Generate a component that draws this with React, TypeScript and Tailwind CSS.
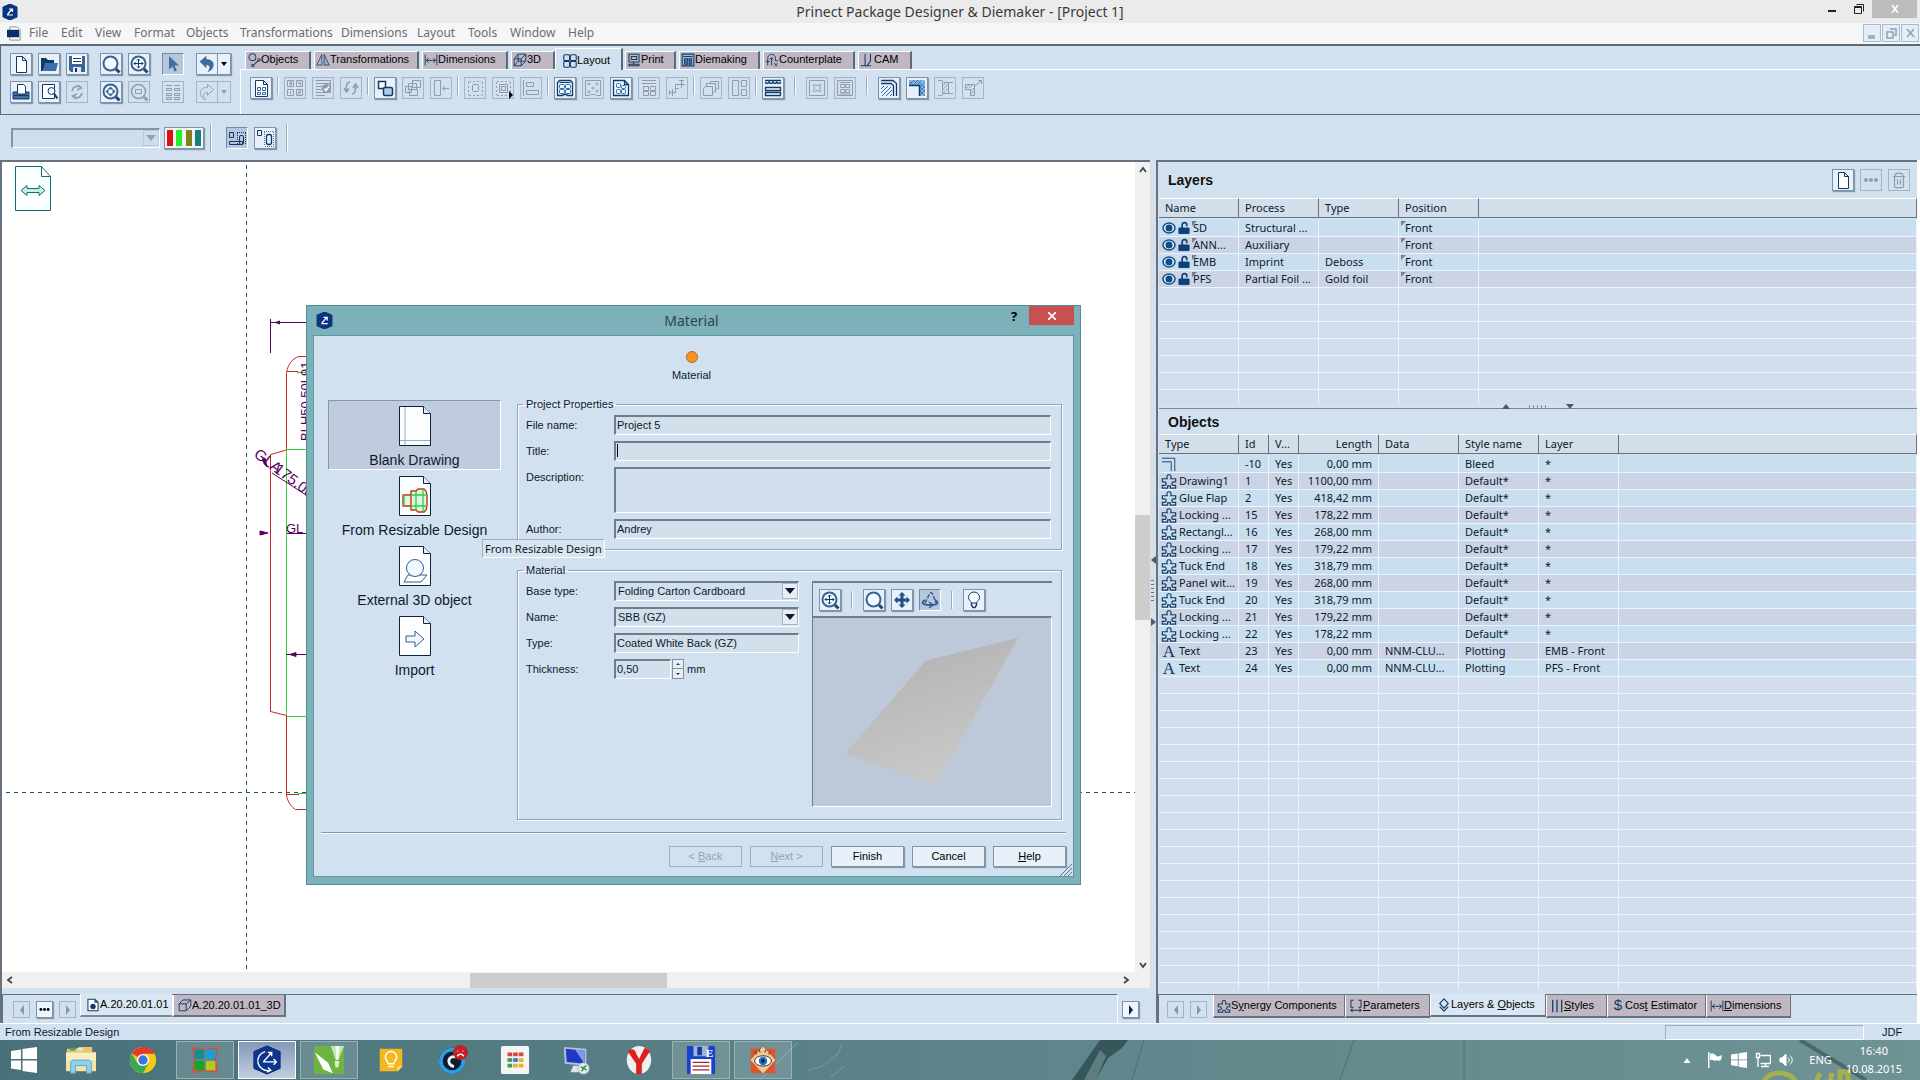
import type { ReactNode } from "react";
import clsx from "clsx";

const sans = "font-['Liberation_Sans',Arial,sans-serif]";
const noto = "font-['Noto_Sans','Open_Sans',sans-serif]";

/* ---------- icons ---------- */

const icons: Record<string, ReactNode> = {
    page: <path d="M4.5 1.5h6l4 4v12h-10zM10.5 1.5v4h4" fill="#fff" />,
    open: (
        <>
            <path d="M1 16V3h5l2 2h6v3H6L3 16z" fill="#123a66" stroke="none" />
            <path d="M3 16l2-8h13l-2 8z" fill="#3b71a8" stroke="none" />
        </>
    ),
    save: (
        <>
            <path d="M1 1h16v16H3l-2-2z" fill="#3b6694" stroke="none" />
            <path d="M4 1h10v8H4z" fill="#fff" stroke="none" />
            <path d="M5 3.5h8M5 6.5h8" />
            <path d="M5 12h8v5H5z" fill="#dfe9f3" stroke="none" />
            <path d="M7 13h2v4H7z" fill="#123a66" stroke="none" />
        </>
    ),
    zoom: (
        <>
            <circle cx="8.500" cy="8.500" r="7" fill="#f4f9ff" strokeWidth="2" stroke="#386494" />
            <path d="M14 14l3.500 3.500" strokeWidth="3" stroke="#1f4673" />
        </>
    ),
    zoomAll: (
        <>
            <circle cx="8.500" cy="8.500" r="7" fill="#f4f9ff" strokeWidth="2" stroke="#386494" />
            <path d="M14 14l3.500 3.500" strokeWidth="3" stroke="#1f4673" />
            <path d="M8.500 4v9M4 8.500h9M7 5.500L8.500 4 10 5.500M7 11.500L8.500 13l1.500-1.500M5.500 7L4 8.500 5.500 10M11.500 7L13 8.500 11.500 10" />
        </>
    ),
    zoomFit: (
        <>
            <circle cx="8.500" cy="8.500" r="7" fill="#f4f9ff" strokeWidth="2" stroke="#386494" />
            <path d="M14 14l3.500 3.500" strokeWidth="3" stroke="#1f4673" />
            <path d="M8.500 3.500l5 5-5 5-5-5z" fill="#386494" stroke="none" />
            <path d="M6.500 6.500h4v4h-4z" fill="#fff" stroke="none" />
        </>
    ),
    zoomRect: (
        <>
            <circle cx="8.500" cy="8.500" r="7" strokeWidth="1.500" />
            <path d="M14 14l3.500 3.500" strokeWidth="3" />
            <path d="M5.500 6.500h6v4h-6z" />
        </>
    ),
    cursor: <path d="M5 1l10 9.500h-4.500l2.500 5-2.500 1-2-5-3.500 3z" fill="#3f6fa3" stroke="none" />,
    undo: (
        <path d="M2 6.500l6-5v3c6 0 8 3 7 7-.5 2-2 4-5 5 2.500-2.500 3-7-2-7v3z" fill="#3b6ca3" stroke="#28527f" strokeWidth=".6" />
    ),
    redo: <path d="M15.500 6.500l-6-5v3c-6 0-8 3-7 7 .5 2 2 4 5 5-2.500-2.500-3-7 2-7v3z" strokeWidth=".9" />,
    print: (
        <>
            <path d="M1 9h16v7H1z" fill="#3b71a8" stroke="#123a66" />
            <path d="M5.500 1.500h6l2 2V11h-8z" fill="#fff" />
            <path d="M2 12.500h14" />
        </>
    ),
    preview: (
        <>
            <path d="M2.500 1.500h12v14h-12z" fill="#fff" />
            <circle cx="11.500" cy="8" r="3.500" fill="#eef5fc" />
            <path d="M14 10.500l3.500 5" strokeWidth="2" />
        </>
    ),
    refresh: <path d="M4 8c1-5 6-6 9-3M10 2l3.500 3L9 7M14 10c-1 5-6 6-9 3M8 16l-3.500-3L9 11" strokeWidth="1.500" />,
    list: <path d="M2 2.500h6M10 2.500h6M2.500 5.500h5v2h-5zM10.500 5.500h5v2h-5zM2.500 10.500h5v2h-5zM10.500 10.500h5v2h-5zM2.500 14.500h5v2h-5zM10.500 14.500h5v2h-5z" />,
    sheet: (
        <>
            <path d="M3.500 1.500h8l4 4v12h-12zM11.500 1.500v4h4" fill="#fff" />
            <path d="M5.500 8.500h3v3h-3zM10.500 8.500h3v3h-3zM5.500 13.500h3v2h-3zM10.500 13.500h3v2h-3z" stroke="#2b6cae" />
        </>
    ),
    numbers: (
        <>
            <path d="M1.500 1.500h6v6h-6zM10.500 1.500h6v6h-6zM1.500 10.500h6v6h-6zM10.500 10.500h6v6h-6z" />
            <path d="M3.500 3h2v3h-2M3.500 4.500h2M12.500 2.500v2h2.500M14.500 3v3.500M4.500 12v3M12.500 12h2v1.500h-2V15h2" />
        </>
    ),
    check: (
        <>
            <path d="M1.500 1.500h15v12h-15M2 4.500h14M2 7.500h14M2 10.500h9M2 13.500h9M2 16.500h9" />
            <circle cx="12.500" cy="9.500" r="4.500" fill="currentColor" stroke="none" />
            <path d="M10.500 9.500l1.500 2 3-4" stroke="#fff" strokeWidth="1.500" />
        </>
    ),
    swap: <path d="M8 3C5 3 4 6 4.500 11M2 9l2.500 4L7 9.500M10 15c3 0 4-4 3.500-8M11 9l2.500-4L16 9" strokeWidth="1.500" />,
    boxes: (
        <>
            <path d="M2.500 2.500h7v7h-7z" fill="#fff" strokeWidth="1.500" />
            <rect x="7.500" y="8.500" width="9" height="8" rx="1.500" fill="#a9d0ea" strokeWidth="1.500" />
        </>
    ),
    boxes3: (
        <>
            <path d="M1.500 7.500h6v6h-6z" />
            <path d="M5.500 10.500h8v6h-8zM8.500 1.500h8v7h-8zM4.500 4.500h8v6h-8z" />
        </>
    ),
    alignLeft: <path d="M2.500 1.500h6v15h-6zM17 9.500h-6M13 7l-2.500 2.500L13 12" />,
    select: (
        <>
            <path d="M3 2.500h13M3 16.500h13M2.500 3v13M16.500 3v13" strokeDasharray="2 2" />
            <rect x="6.500" y="5.500" width="6" height="7" rx="1" />
        </>
    ),
    selectBox: (
        <>
            <path d="M3 2.500h13M3 16.500h13M2.500 3v13M16.500 3v13" strokeDasharray="2 2" />
            <path d="M5.500 5.500h8v8h-8zM7.500 7.500h4v4h-4z" />
            <path d="M15 12l4 4-4 4z" fill="#000" stroke="none" />
        </>
    ),
    bars: <path d="M1.500 1v16M4.500 3.500h7v4h-7zM4.500 11.500h12v4h-12z" />,
    layoutGrid: (
        <>
            <path d="M1.500 16.500v-13l2-2h11l2 2v13h-5l-1-1h-3l-1 1z" fill="#eef6fd" strokeWidth="1.300" />
            <path d="M3.500 3.500h11" />
            <rect x="3.500" y="5.500" width="5" height="4" rx="1" stroke="#2b6cae" />
            <rect x="9.500" y="5.500" width="5" height="4" rx="1" stroke="#2b6cae" />
            <rect x="3.500" y="10.500" width="5" height="4" rx="1" stroke="#2b6cae" />
            <rect x="9.500" y="10.500" width="5" height="4" rx="1" stroke="#2b6cae" />
        </>
    ),
    dice: (
        <>
            <path d="M1.500 1.500h15v15h-4l-1-1h-5l-1 1h-4z" />
            <circle cx="5" cy="5" r="1" /><circle cx="13" cy="5" r="1" /><circle cx="9" cy="9" r="1" />
            <circle cx="5" cy="13" r="1" /><circle cx="13" cy="12" r="1" />
        </>
    ),
    layoutPage: (
        <>
            <path d="M1.500 1.500h11l4 4v11h-15zM12.500 1.500v4h4" fill="#eef6fd" strokeWidth="1.300" />
            <rect x="4.500" y="4.500" width="4" height="4" rx="1" stroke="#2b6cae" />
            <rect x="9.500" y="6.500" width="4" height="3" rx="1" stroke="#2b6cae" />
            <rect x="4.500" y="10.500" width="4" height="4" rx="1" stroke="#2b6cae" />
            <rect x="9.500" y="10.500" width="4" height="4" rx="1" stroke="#2b6cae" />
        </>
    ),
    gridRows: <path d="M2 1.500h14M2 4.500h14M3.500 7.500h5v4h-5zM10.500 7.500h5v4h-5zM3.500 12.500h5v4h-5zM10.500 12.500h5v4h-5z" />,
    steps: <path d="M1 13.500h6.500M4.500 10v7M7.500 13.500v-8H17M13.500 1v8M11 1.500h5M1.500 11v5M7 9.500h4" />,
    stack: <path d="M1.500 9.500l2-2h7v9h-9zM4.500 7V4.500h9V13h-3M8.500 4.500v-2h8V10h-3" />,
    panels: <path d="M2.500 1.500h6v15h-6zM11.500 1.500h5v6h-5zM11.500 10.500h5v6h-5z" />,
    wave: (
        <>
            <path d="M1 1.500h16M1 3c1 2 3 2 4 0 1 2 3 2 4 0 1 2 3 2 4 0 1 2 3 2 4 0" strokeWidth="1.300" />
            <path d="M1.500 8.500h15v3h-15zM1.500 13.500h15v3h-15z" fill="#fff" strokeWidth="1.300" />
        </>
    ),
    star: (
        <>
            <path d="M1.500 1.500h15v15h-15z" />
            <path d="M5.500 5.500c1 0 2 1 3.500 1s2.500-1 3.500-1c1 1-1 2-1 3.500s2 2.500 1 3.500-2-1-3.500-1-2.500 2-3.500 1 1-2 1-3.500-2-2.500-1-3.500z" />
        </>
    ),
    rows: <path d="M1.500 1.500h15v15h-15zM3.500 3.500h11M4.500 5.500h4v3h-4zM9.500 5.500h4v3h-4zM4.500 10.500h4v3h-4zM9.500 10.500h4v3h-4zM3.500 15h11" />,
    hatch: (
        <>
            <path d="M1 1.500h12l3.500 3V17M1 4.500h10l2.500 2V17" strokeWidth="1.300" />
            <path d="M1 10l3-3M1 14l7-7M2 17l9-9M6 17l6-6M10 17l2-2" stroke="#2b6cae" />
        </>
    ),
    corner: (
        <>
            <path d="M1 1h16v16h-5V6H1z" fill="#8db6dd" stroke="none" />
            <path d="M1 6l5-5M5 6l5-5M9 6l5-5M12 8l5-5M12 12l5-5M12 16l5-5M1 2l4 4M5 1l5 5M9 1l8 8M12 8l5 5M12 12l5 5" stroke="#2b6cae" strokeWidth=".7" />
            <path d="M1 6.500h10.500V17" strokeWidth="1.500" />
        </>
    ),
    cylinder: <path d="M2 1.500h4l2 2h9M2 16.500h4l2-2h9M6.500 3v12M12.500 4v10M6.500 7l4-4M6.500 11l6-6M6.500 15l6-6" />,
    cornerArrow: (
        <>
            <path d="M1.500 5.500h9v11h-4v-6h-5z" />
            <path d="M2 9l3-3M5 9l3-3M7 12l3-3M7 15l3-3M11 7l6-5M14 1.500h3.500V5" />
        </>
    ),
    dots: (
        <>
            <circle cx="4" cy="9" r="2" fill="currentColor" stroke="none" />
            <circle cx="9" cy="9" r="2" fill="currentColor" stroke="none" />
            <circle cx="14" cy="9" r="2" fill="currentColor" stroke="none" />
        </>
    ),
    trash: <path d="M3 5.500h12M5 5V4c1-2.500 7-2.500 8 0v1M4.500 6v10c0 1 9 1 9 0V6M7.500 8.500v5M10.500 8.500v5" strokeWidth="1.200" />,
    nodesA: (
        <>
            <path d="M1.500 3.500h4v5h-4zM1.500 12.500h13v3h-13z" />
            <rect x="11.500" y="6.500" width="4" height="9" rx="1.500" />
            <path d="M9 3.500h9M9.500 4v12M17.500 4v12" strokeDasharray="1 1" />
        </>
    ),
    nodesB: (
        <>
            <path d="M1.500 1.500h4v5h-4z" />
            <rect x="10.500" y="5.500" width="5" height="10" rx="2" strokeWidth="1.300" />
            <path d="M8 2.500h10M8.500 3v14M17.500 3v14M9 17.500h9" strokeDasharray="1 1" stroke="#3f7fc0" />
        </>
    ),
    pan: <path d="M9 1l3.500 3.500H10.500v3h3V5.500L17 9l-3.500 3.500v-2h-3v3h2L9 17l-3.500-3.500h2v-3h-3v2L1 9l3.500-3.500v2h3v-3h-2z" fill="#1f4f85" stroke="none" />,
    rotate: (
        <g stroke="#2b5c96">
            <path d="M4 12L8 4c1-3 3-3 4 0l3 8" strokeWidth="1.500" strokeDasharray="4 1.500" />
            <path d="M4 9c-5 3-2 5 5 5s10-2 5-5" strokeWidth="1.800" />
            <path d="M8 11l4 3-4 3" strokeWidth="1.500" />
        </g>
    ),
    bulb: (
        <>
            <path d="M6.500 12C6 10 3.500 9 3.500 6.500a5.500 5.500 0 0 1 11 0C14.500 9 12 10 11.500 12z" fill="#f8fcff" />
            <path d="M6.500 12v2l1.500 2.500h2l1.500-2.500v-2" strokeWidth="1.400" />
        </>
    ),
    tabObjects: <path d="M11.500 5.500a4.500 4.500 0 1 1-9 0 4.500 4.500 0 0 1 9 0zM9.500 14.500L14 10M6 16a1.500 1.500 0 1 0 3 0 1.500 1.500 0 1 0-3 0zM14 9a1.500 1.500 0 1 0 3 0 1.500 1.500 0 1 0-3 0" strokeWidth="1.300" />,
    tabTransform: (
        <>
            <path d="M1 15.500h6.500V2z" />
            <path d="M10.500 2v13.500H17z" fill="#8fb3d6" />
        </>
    ),
    tabDim: <path d="M1.500 2v14M16.500 2v14M3 9.500h12M6 6.500l-3 3 3 3M12 6.500l3 3-3 3" strokeWidth="1.200" />,
    cube: <path d="M1.500 7.500h9v9h-9zM1.500 7.500l5-6h10l-6 6M16.500 1.500v9l-6 6M6.500 1.500v9M6.500 10.500h10M6.500 10.500l-5 6" strokeWidth="1.200" />,
    cubePlain: <path d="M1.500 7.500h9v9h-9zM1.500 7.500l5-5h10l-6 5M16.500 2.500v8l-6 6" strokeWidth="1.200" />,
    tabLayout: (
        <g strokeWidth="1.400">
            <rect x="1" y="1" width="7.500" height="7.500" rx="1.500" /><rect x="9.500" y="1" width="7.500" height="7.500" rx="1.500" />
            <rect x="1" y="9.500" width="7.500" height="7.500" rx="1.500" /><rect x="9.500" y="9.500" width="7.500" height="7.500" rx="1.500" />
        </g>
    ),
    tabPrint: <path d="M2.500 1.500h13v10h-13zM5.500 4.500h7v4h-7zM8.500 11.500v3M2.500 14.500h13v2h-13z" strokeWidth="1.300" />,
    tabDie: <path d="M1.500 1.500h15v15h-15zM3 4.500h12M4.500 7.500h4v3h-4zM10.500 7.500h3v3h-3zM4.500 12.500h4v2h-4zM10.500 12.500h3v2h-3z" fill="#9cbbe0" strokeWidth="1.400" />,
    tabCounter: <path d="M3.500 16V7c0-7 10-7 10 0v3h3M1 11h5M8.500 16V6M6 8.500L8.500 6 11 8.500M12 13l4 4M16 13l-4 4" strokeWidth="1.200" />,
    tabCam: <path d="M1 16.500h13M6.500 1v15M13.500 1v9l-4 6" strokeWidth="1.300" />,
    docDot: (
        <>
            <path d="M2.500 1.500h9l4 4v11h-13zM11.500 1.500v4h4" fill="#fff" strokeWidth="1.300" />
            <circle cx="9" cy="11" r="3.500" fill="#123a66" stroke="none" />
        </>
    ),
    puzzle: (
        <path
            d="M1.500 6.500h5.500c-2.500-6 6.500-6 4 0h5.500v3.500h-2c-3 0-3 4 0 4h2v3h-6v-2.500h-3v2.500h-6v-3h2c3 0 3-4 0-4h-2z"
            strokeWidth="1.300"
        />
    ),
    params: <path d="M6 1.500H2.500v9H6M12 1.500h3.500v9H12M2 14.500h14M4.500 12.500l-2 2 2 2M13.500 12.500l2 2-2 2" strokeWidth="1.300" />,
    layers: <path d="M9 1l5.500 6L9 13 3.500 7zM3.500 11L9 17l5.500-6" strokeWidth="1.500" />,
    styles: <path d="M3.500 1v16M9 1v16M15 1v16" strokeWidth="1.600" />,
    bleed: <path d="M1 2.500h14.500V17M1 6.500h10.500V17" />,
};

function Icon({ name, size = "size-[18px]", color = "text-[#123a66]" }: { name: string; size?: string; color?: string }) {
    return (
        <svg viewBox="0 0 18 18" className={clsx("shrink-0 overflow-visible", size, color)} fill="none" stroke="currentColor" aria-hidden="true">
            {icons[name]}
        </svg>
    );
}

type ToolState = "on" | "off" | "pressed";

function Tool({ icon, label, state = "on" }: { icon: string; label: string; state?: ToolState }) {
    return (
        <button
            type="button"
            aria-label={label}
            disabled={state === "off"}
            className={clsx(
                "flex h-[22px] w-[22px] shrink-0 items-center justify-center border",
                state === "on" && "border-[#7f93a8] bg-[#e8f1fb] shadow-[1px_1px_1px_#8797a8]",
                state === "off" && "border-[#a3b5c4]",
                state === "pressed" && "border-[#7889a0] border-r-white border-b-white bg-[#b8c6dc]"
            )}
        >
            <Icon name={icon} color={state === "off" ? "text-[#909da8]" : "text-[#123a66]"} />
        </button>
    );
}

function Sep({ wide = false }: { wide?: boolean }) {
    return (
        <div className={clsx("flex h-[18px] justify-center", wide ? "w-[10px]" : "w-0")}>
            <div className="w-[2px] shrink-0 border-r border-white bg-[#9aabba]" />
        </div>
    );
}

/* ---------- data ---------- */

const menus = [
    { label: "File", width: "w-8" },
    { label: "Edit", width: "w-[34px]" },
    { label: "View", width: "w-[39px]" },
    { label: "Format", width: "w-[52px]" },
    { label: "Objects", width: "w-[54px]" },
    { label: "Transformations", width: "w-[101px]" },
    { label: "Dimensions", width: "w-[76px]" },
    { label: "Layout", width: "w-[51px]" },
    { label: "Tools", width: "w-[42px]" },
    { label: "Window", width: "w-[58px]" },
    { label: "Help", width: "w-[30px]" },
];

const toolTabs = [
    { label: "Objects", icon: "tabObjects", width: "w-[66px]" },
    { label: "Transformations", icon: "tabTransform", width: "w-[105px]" },
    { label: "Dimensions", icon: "tabDim", width: "w-[86px]" },
    { label: "3D", icon: "cube", width: "w-[44px]" },
    { label: "Layout", icon: "tabLayout", width: "w-[68px]", active: true },
    { label: "Print", icon: "tabPrint", width: "w-[51px]" },
    { label: "Diemaking", icon: "tabDie", width: "w-[81px]" },
    { label: "Counterplate", icon: "tabCounter", width: "w-[92px]" },
    { label: "CAM", icon: "tabCam", width: "w-[54px]" },
];

const layoutTools: [string, string, ToolState][] = [
    ["sheet", "New sheet", "on"],
    ["|", "", "off"],
    ["numbers", "Numbering", "off"],
    ["check", "Check layout", "off"],
    ["swap", "Swap", "off"],
    ["|", "", "off"],
    ["boxes", "Copy one-up", "on"],
    ["boxes3", "Group", "off"],
    ["alignLeft", "Move", "off"],
    ["|", "", "off"],
    ["select", "Select one-up", "off"],
    ["selectBox", "Select area", "off"],
    ["bars", "Align", "off"],
    ["|", "", "off"],
    ["layoutGrid", "Fill sheet", "on"],
    ["dice", "Mixed layout", "off"],
    ["layoutPage", "Page layout", "on"],
    ["gridRows", "Rows", "off"],
    ["steps", "Steps", "off"],
    ["|", "", "off"],
    ["stack", "Stack", "off"],
    ["panels", "Panels", "off"],
    ["|", "", "off"],
    ["wave", "Corrugation", "on"],
    ["||", "", "off"],
    ["star", "Stripping", "off"],
    ["rows", "Blanking", "off"],
    ["||", "", "off"],
    ["hatch", "Hatch", "on"],
    ["corner", "Corner", "on"],
    ["cylinder", "Cylinder", "off"],
    ["cornerArrow", "Extend", "off"],
];

const layers = [
    ["SD", "Structural ...", "", "Front"],
    ["ANN...", "Auxiliary", "", "Front"],
    ["EMB", "Imprint", "Deboss", "Front"],
    ["PFS", "Partial Foil ...", "Gold foil", "Front"],
];

const objects = [
    ["bleed", "", "-10", "0,00 mm", "", "Bleed", "*"],
    ["puzzle", "Drawing1", "1", "1100,00 mm", "", "Default*", "*"],
    ["puzzle", "Glue Flap", "2", "418,42 mm", "", "Default*", "*"],
    ["puzzle", "Locking ...", "15", "178,22 mm", "", "Default*", "*"],
    ["puzzle", "Rectangl...", "16", "268,00 mm", "", "Default*", "*"],
    ["puzzle", "Locking ...", "17", "179,22 mm", "", "Default*", "*"],
    ["puzzle", "Tuck End", "18", "318,79 mm", "", "Default*", "*"],
    ["puzzle", "Panel wit...", "19", "268,00 mm", "", "Default*", "*"],
    ["puzzle", "Tuck End", "20", "318,79 mm", "", "Default*", "*"],
    ["puzzle", "Locking ...", "21", "179,22 mm", "", "Default*", "*"],
    ["puzzle", "Locking ...", "22", "178,22 mm", "", "Default*", "*"],
    ["A", "Text", "23", "0,00 mm", "NNM-CLU...", "Plotting", "EMB - Front"],
    ["A", "Text", "24", "0,00 mm", "NNM-CLU...", "Plotting", "PFS - Front"],
];

/* ---------- header ---------- */

function AppLogo({ size = "size-4" }: { size?: string }) {
    return (
        <svg viewBox="0 0 16 16" className={clsx("shrink-0", size)} aria-hidden="true">
            <path d="M8 0l7 3v10l-7 3-7-3V3z" fill="#0b3583" stroke="#0b3583" strokeLinejoin="round" />
            <path d="M5 11h6M5.500 10.500L10 5M7 5h3.500v3" stroke="#fff" strokeWidth="1.200" fill="none" />
        </svg>
    );
}

function TitleBar() {
    return (
        <header className={clsx("flex h-[23px] items-center bg-[#ebebeb] text-[#3a3a3a]", noto)}>
            <div className="flex w-[140px] pl-[2px]">
                <AppLogo />
            </div>
            <h1 className="flex-1 text-center text-[14px] leading-5">Prinect Package Designer &amp; Diemaker - [Project 1]</h1>
            <div className="flex h-full w-[140px] items-start justify-end pr-[3px]">
                <button type="button" aria-label="Minimize" className="flex h-[22px] w-[26px] items-center justify-center">
                    <span className="h-[2px] w-2 bg-[#222]" />
                </button>
                <button type="button" aria-label="Restore" className="flex h-[18px] w-[27px] items-center justify-center">
                    <svg viewBox="0 0 12 12" className="size-3" fill="none" stroke="#222"><path d="M1.500 3.500h7v7h-7zM3.500 1.500h7v7M1.500 4.500h7" /></svg>
                </button>
                <button type="button" aria-label="Close" className="flex h-[18px] w-[45px] items-center justify-center bg-[#bcbcbc]">
                    <svg viewBox="0 0 8 8" className="size-2" stroke="#fff" strokeWidth="1.600"><path d="M1 0l6 8M7 0L1 8" /></svg>
                </button>
            </div>
        </header>
    );
}

function MenuBar() {
    return (
        <nav className={clsx("flex h-[21px] items-center bg-[#f5f6f7] pb-px text-[12px] leading-4 text-[#6d6d6d]", noto)}>
            <svg viewBox="0 0 16 16" className="mr-[7px] ml-[7px] size-[15px]" aria-hidden="true">
                <path d="M3 1h8l3 3v11H3z" fill="#fff" stroke="#8a8a8a" />
                <path d="M0 4h13v8H0z" fill="#0a2f6f" />
            </svg>
            {menus.map((m) => (
                <button key={m.label} type="button" className={clsx("shrink-0 text-left whitespace-nowrap", m.width)}>
                    {m.label}
                </button>
            ))}
            <div className="ml-auto flex gap-px pr-px">
                {["M5 11h5v2H5z", "M4 7h6v6H4zM7 4h6v6h-2", "M5 4l7 8M12 4l-7 8"].map((d, i) => (
                    <button key={d} type="button" aria-label={["Minimize view", "Restore view", "Close view"][i]} className="size-[18px] border border-[#a9bccd] bg-[#e4eef8]">
                        <svg viewBox="0 0 16 16" className="size-4" fill="none" stroke="#8fa0b2" strokeWidth="1.500"><path d={d} /></svg>
                    </button>
                ))}
            </div>
        </nav>
    );
}

function DropMini({ label, off = false }: { label: string; off?: boolean }) {
    return (
        <button
            type="button"
            aria-label={label}
            disabled={off}
            className={clsx("flex h-[22px] w-[13px] items-center justify-center border border-l-0", off ? "border-[#a3b5c4]" : "border-[#7f93a8] bg-[#e8f1fb] shadow-[1px_1px_1px_#8797a8]")}
        >
            <svg viewBox="0 0 6 4" className="h-1 w-[6px]"><path d="M0 0h6L3 4z" fill={off ? "#909da8" : "#000"} /></svg>
        </button>
    );
}

function MainToolbar() {
    return (
        <div className="flex h-[68px] border-l border-[#5c6a78]">
            <div className="flex w-[239px] flex-col gap-[6px] pt-[7px] pl-[9px]">
                <div className="flex gap-[6px]">
                    <Tool icon="page" label="New" />
                    <Tool icon="open" label="Open" />
                    <Tool icon="save" label="Save" />
                    <div className="w-0" />
                    <Tool icon="zoom" label="Zoom" />
                    <Tool icon="zoomAll" label="Zoom all" />
                    <div className="w-0" />
                    <Tool icon="cursor" label="Select" state="pressed" />
                    <div className="w-0" />
                    <div className="flex">
                        <Tool icon="undo" label="Undo" />
                        <DropMini label="Undo list" />
                    </div>
                </div>
                <div className="flex gap-[6px]">
                    <Tool icon="print" label="Print" />
                    <Tool icon="preview" label="Print preview" />
                    <Tool icon="refresh" label="Refresh" state="off" />
                    <div className="w-0" />
                    <Tool icon="zoomFit" label="Zoom to fit" />
                    <Tool icon="zoomRect" label="Zoom area" state="off" />
                    <div className="w-0" />
                    <Tool icon="list" label="Properties" state="off" />
                    <div className="w-0" />
                    <div className="flex">
                        <Tool icon="redo" label="Redo" state="off" />
                        <DropMini label="Redo list" off />
                    </div>
                </div>
            </div>
            <div className="flex flex-1 flex-col">
                <div className={clsx("flex h-[23px] items-end gap-[3px] pl-[5px] text-[11px] text-black", sans)} role="tablist">
                    {toolTabs.map((t) => (
                        <button
                            key={t.label}
                            type="button"
                            role="tab"
                            aria-selected={!!t.active}
                            className={clsx(
                                "flex items-center border-t border-r-2 border-l border-white border-r-[#5c6a78] whitespace-nowrap",
                                t.width,
                                t.active ? "relative -mr-px -mb-px -ml-[3px] h-[22px] bg-[#d2e1ef] pt-[2px] pl-[7px]" : "h-[18px] bg-[#bfb8c3] pb-[2px] pl-px"
                            )}
                        >
                            <Icon name={t.icon} size="size-[14px]" />
                            {t.label}
                        </button>
                    ))}
                </div>
                <div className="flex flex-1 gap-[6px] border-t border-l border-white pt-[7px] pl-[9px]">
                    {layoutTools.map(([icon, label, state], i) =>
                        icon[0] === "|" ? <Sep key={i} wide={icon === "||"} /> : <Tool key={i} icon={icon} label={label} state={state} />
                    )}
                </div>
            </div>
        </div>
    );
}

function StyleBar() {
    return (
        <div className="flex h-[46px] items-center border-t border-[#5c6a78] pl-[11px]">
            <div className="relative mr-1">
                <select aria-label="Line style" disabled className="block h-5 w-[149px] appearance-none border border-t-2 border-l-2 border-[#8695a4] border-r-white border-b-white bg-[#cfdeeb]" />
                <span className="pointer-events-none absolute top-[2px] right-[1px] flex h-4 w-4 items-center justify-center border border-[#bccad7]">
                    <svg viewBox="0 0 10 6" className="h-[6px] w-[10px]"><path d="M0 0h10L5 6z" fill="#93a3b3" /></svg>
                </span>
            </div>
            <button type="button" aria-label="Colors" className="flex h-[22px] w-10 items-center justify-around border border-[#7f93a8] bg-[#f2f5f8] shadow-[1px_1px_1px_#8797a8]">
                <span className="h-4 w-[6px] bg-[#e01010]" />
                <span className="h-4 w-[6px] bg-[#22ee22]" />
                <span className="h-4 w-[6px] bg-[#80801a]" />
                <span className="h-4 w-[6px] bg-[#158080]" />
            </button>
            <div className="mr-[14px] ml-[6px] h-7 w-[2px] border-r border-white bg-[#9aabba]" />
            <div className="flex items-center gap-[6px]">
                <Tool icon="nodesA" label="Snap to objects" state="pressed" />
                <Tool icon="nodesB" label="Snap to grid" />
            </div>
            <div className="ml-[10px] h-7 w-[2px] border-r border-white bg-[#9aabba]" />
        </div>
    );
}

/* ---------- drawing canvas ---------- */

function Canvas() {
    return (
        <svg className={clsx("size-full bg-white", sans)} aria-label="Drawing canvas">
            {/* drawing coordinates are window coordinates, shifted to the canvas corner */}
            <g transform="translate(-2 -162)" fill="none">
                <path d="M15.500 166.500h26l9 10v34h-35zM41.500 166.500v10h9" stroke="#0f6f6f" fill="#fbffff" />
                <path d="M21 190.500l6-5v3h12v-3l6 5-6 5v-3H27v3z" stroke="#0f6f6f" fill="#c9ece8" />
                <path d="M246.500 165v808M6 792.500h1130" stroke="#24565c" strokeDasharray="4 4" />
                <path d="M270.500 319v34M271 322.500h40" stroke="#56005e" />
                <path d="M274 322.500l6-2v4z" fill="#56005e" />
                <path d="M307 356.500h-8c-7 2-11 8-12.500 16V450l-16 4.500v257l16 4V795c1 7 5 12 9 14.500h12M287 371.500h11v2M287 794.500h12" stroke="#c8262c" />
                <path d="M286.500 450v265M286.500 449.500h22M287 716.500h22M298 372.500h10M298 793.500h10" stroke="#2fd02f" />
                <path d="M286 654.500h24M287 533.500h22" stroke="#56005e" />
                <path d="M290 654.500l6-2v4zM260 531v4l8-2z" fill="#56005e" stroke="#56005e" />
                <g fill="#56005e" fontSize="15">
                    <text transform="translate(253 456) rotate(37)">GLA</text>
                    <text transform="translate(273 471) rotate(37)">175.00</text>
                    <path d="M262 460l5 7-2-9zM272 473l34 22" stroke="#56005e" />
                    <text transform="translate(310 441) rotate(-90)" fontSize="13">BLH50.50L91</text>
                    <text x="286" y="533" fontSize="13">GL D</text>
                </g>
            </g>
        </svg>
    );
}

function Chevron({ d, label }: { d: string; label: string }) {
    return (
        <button type="button" aria-label={label} className="flex size-[15px] shrink-0 items-center justify-center">
            <svg viewBox="0 0 8 8" className="size-2" fill="none" stroke="#444" strokeWidth="1.800"><path d={d} /></svg>
        </button>
    );
}

function NavButton({ d, label, off = false }: { d: string; label: string; off?: boolean }) {
    return (
        <button
            type="button"
            aria-label={label}
            disabled={off}
            className={clsx("flex size-[17px] items-center justify-center border", off ? "border-[#a3b5c4]" : "border-[#7f93a8] bg-[#eef5fc] shadow-[1px_1px_1px_#8797a8]")}
        >
            <svg viewBox="0 0 12 12" className="size-3"><path d={d} fill={off ? "#8797a8" : "#0b2440"} /></svg>
        </button>
    );
}

const leftTri = "M8 1v10L4 6z";
const rightTri = "M4 1v10l4-5z";

function DrawingPane() {
    return (
        <section className="flex min-w-0 flex-1 flex-col border-t-2 border-l-2 border-[#66727f]">
            <div className="flex min-h-0 flex-1">
                <div className="min-w-0 flex-1 bg-white">
                    <Canvas />
                </div>
                <div className="flex w-[15px] flex-col items-center bg-[#f0f0f0]">
                    <Chevron label="Scroll up" d="M1 6l3-4 3 4" />
                    <div className="h-[338px]" />
                    <div className="h-[105px] w-full bg-[#cdcdcd]" />
                    <div className="flex-1" />
                    <Chevron label="Scroll down" d="M1 2l3 4 3-4" />
                </div>
            </div>
            <div className="flex h-4 items-center bg-[#f0f0f0] pr-[17px]">
                <Chevron label="Scroll left" d="M6 1L2 4l4 3" />
                <div className="w-[453px]" />
                <div className="h-[15px] w-[197px] bg-[#cdcdcd]" />
                <div className="flex-1" />
                <Chevron label="Scroll right" d="M2 1l4 3-4 3" />
            </div>
            <div className="flex h-[35px] gap-1 pt-[6px]">
                <div className={clsx("flex flex-1 border-t border-r border-l border-[#66727f] border-r-white text-[11px]", sans)}>
                    <div className="flex gap-[6px] pt-[6px] pl-[10px]">
                        <NavButton label="Previous drawing" d={leftTri} off />
                        <button type="button" aria-label="Drawing list" className="flex size-[17px] items-center justify-center border border-[#7f93a8] bg-[#eef5fc] shadow-[1px_1px_1px_#8797a8]">
                            <Icon name="dots" size="size-[13px]" color="text-black" />
                        </button>
                        <NavButton label="Next drawing" d={rightTri} off />
                    </div>
                    <button type="button" className="-mt-px ml-1 flex h-[23px] w-[92px] items-center border-b-2 border-l border-[#7b8896] border-l-white bg-[#d9e6f3] pl-[5px]">
                        <Icon name="docDot" size="size-[14px]" />
                        <span>A.20.20.01.01</span>
                    </button>
                    <button type="button" className="flex h-[22px] w-[114px] items-center border-r-2 border-b-2 border-l-2 border-[#66727f] border-l-white bg-[#bfb8c3] pl-1">
                        <Icon name="cubePlain" size="size-[14px]" />
                        <span>A.20.20.01.01_3D</span>
                    </button>
                </div>
                <div className="w-7 pt-[7px]">
                    <NavButton label="Scroll tabs" d={rightTri} />
                </div>
            </div>
        </section>
    );
}

/* ---------- side panel ---------- */

const th = "h-5 border-r border-b border-[#66727f] border-t border-t-white px-[6px] text-left font-normal";
const td = "h-[17px] border-r border-b border-[#edf3fa] px-[6px] whitespace-nowrap overflow-hidden";

function rowColor(i: number, count: number) {
    if (i >= count) return "bg-[#d3deed]";
    return i % 2 ? "bg-[#cad4e5]" : "bg-[#c9deee]";
}

function Mark() {
    return <svg viewBox="0 0 5 5" className="mb-[9px] size-[5px] shrink-0"><path d="M0 0h5L0 5z" fill="#7c7f80" /></svg>;
}

function LayersTable() {
    return (
        <table className={clsx("w-full table-fixed border-separate border-spacing-0 text-[11px] leading-4 text-[#0c1a2c]", noto)}>
            <colgroup>
                <col className="w-20" /><col className="w-20" /><col className="w-20" /><col className="w-20" /><col />
            </colgroup>
            <thead className="bg-[#d3deeb]">
                <tr>
                    <th className={th}>Name</th>
                    <th className={th}>Process</th>
                    <th className={th}>Type</th>
                    <th className={th}>Position</th>
                    <th className={th} aria-label="Spare" />
                </tr>
            </thead>
            <tbody>
                <tr>
                    <td colSpan={5} className="h-[2px]" />
                </tr>
                {Array.from({ length: 12 }, (_, i) => {
                    const row = layers[i];
                    return (
                        <tr key={i} className={rowColor(i, layers.length)}>
                            <td className={clsx(td, "pr-0 pl-[3px]")}>
                                {row && (
                                    <span className="flex items-center gap-[2px]">
                                        <svg viewBox="0 0 14 14" className="size-[14px] shrink-0">
                                            <ellipse cx="7" cy="7" rx="6" ry="5" fill="#e8f3fc" stroke="#0d4d8a" strokeWidth="1.500" />
                                            <circle cx="7" cy="7" r="3.500" fill="#0d4d8a" />
                                        </svg>
                                        <svg viewBox="0 0 13 14" className="h-[14px] w-3 shrink-0" fill="none" stroke="#0d3f7a">
                                            <path d="M4.500 7V3.500c0-3 5-3 5 0V5" strokeWidth="1.800" />
                                            <path d="M1 7h11v6H1z" fill="#0d3f7a" />
                                        </svg>
                                        <span className="flex items-center">
                                            <Mark /> <span className="-ml-1">{row[0]}</span>
                                        </span>
                                    </span>
                                )}
                            </td>
                            <td className={td}>{row?.[1]}</td>
                            <td className={td}>{row?.[2]}</td>
                            <td className={clsx(td, "pl-[2px]")}>
                                {row && (
                                    <span className="flex items-center">
                                        <Mark /> <span className="-ml-px">{row[3]}</span>
                                    </span>
                                )}
                            </td>
                            <td className={td} />
                        </tr>
                    );
                })}
            </tbody>
        </table>
    );
}

function ObjectsTable() {
    return (
        <table className={clsx("w-full table-fixed border-separate border-spacing-0 text-[11px] leading-4 text-[#0c1a2c]", noto)}>
            <colgroup>
                <col className="w-20" /><col className="w-[30px]" /><col className="w-[30px]" /><col className="w-20" />
                <col className="w-20" /><col className="w-20" /><col className="w-20" /><col />
            </colgroup>
            <thead className="bg-[#d3deeb]">
                <tr>
                    <th className={th}>Type</th>
                    <th className={th}>Id</th>
                    <th className={clsx(th, "pr-0")}>V...</th>
                    <th className={clsx(th, "text-right")}>Length</th>
                    <th className={th}>Data</th>
                    <th className={th}>Style name</th>
                    <th className={th}>Layer</th>
                    <th className={th} aria-label="Spare" />
                </tr>
            </thead>
            <tbody>
                <tr>
                    <td colSpan={8} className="h-[2px]" />
                </tr>
                {Array.from({ length: 32 }, (_, i) => {
                    const row = objects[i];
                    return (
                        <tr key={i} className={rowColor(i, objects.length)}>
                            <td className={clsx(td, "pr-0 pl-[2px]")}>
                                {row && (
                                    <span className="flex h-4 items-center gap-[2px]">
                                        {row[0] === "A" ? (
                                            <svg viewBox="0 0 16 16" className="size-4 shrink-0 font-['Liberation_Serif',serif]" aria-hidden="true">
                                                <text x="8" y="14" textAnchor="middle" fontSize="17" fill="#0d2f5a">A</text>
                                            </svg>
                                        ) : (
                                            <Icon name={row[0]} size="size-4" />
                                        )}
                                        {row[1]}
                                    </span>
                                )}
                            </td>
                            <td className={clsx(td, "pr-0")}>{row?.[2]}</td>
                            <td className={clsx(td, "pr-0")}>{row && "Yes"}</td>
                            <td className={clsx(td, "pl-0 text-right")}>{row?.[3]}</td>
                            <td className={td}>{row?.[4]}</td>
                            <td className={td}>{row?.[5]}</td>
                            <td className={td}>{row?.[6]}</td>
                            <td className={td} />
                        </tr>
                    );
                })}
            </tbody>
        </table>
    );
}

const panelTabs = [
    { icon: "puzzle", text: <>S<u>y</u>nergy Components</>, width: "w-[132px]" },
    { icon: "params", text: <><u>P</u>arameters</>, width: "w-[85px]" },
    { icon: "layers", text: <>Layers &amp; <u>O</u>bjects</>, width: "w-[116px]", active: true },
    { icon: "styles", text: <><u>S</u>tyles</>, width: "w-[61px]" },
    { icon: "$", text: <>Cos<u>t</u> Estimator</>, width: "w-[99px]" },
    { icon: "tabDim", text: <><u>D</u>imensions</>, width: "w-[85px]" },
];

function SidePanel() {
    return (
        <aside className="flex w-[770px] shrink-0">
            <div className="flex w-2 flex-col items-center border-r-2 border-[#66727f] bg-[#d5e0ea] pt-[396px]">
                <svg viewBox="0 0 5 70" className="h-[70px] w-[5px]">
                    <path d="M5 0v8L0 4zM0 62v8l5-4z" fill="#4f5a65" />
                    <path d="M1.500 24v22" stroke="#66727f" strokeWidth="3" strokeDasharray="1 3" />
                </svg>
            </div>
            <div className="flex min-w-0 flex-1 flex-col border-r-[3px] border-white">
                <div className="flex min-h-0 flex-1 flex-col border-t-2 border-[#66727f] pl-px">
                    <div className="flex h-9 shrink-0 items-center gap-[6px] pr-[7px] pl-[9px]">
                        <h2 className={clsx("flex-1 text-[14px] font-bold text-[#111]", sans)}>Layers</h2>
                        <Tool icon="page" label="New layer" />
                        <Tool icon="dots" label="Layer options" state="off" />
                        <Tool icon="trash" label="Delete layer" state="off" />
                    </div>
                    <div className="h-[206px] shrink-0 overflow-hidden">
                        <LayersTable />
                    </div>
                    <div className="flex h-[5px] shrink-0 justify-center border-b border-[#7c8996] bg-[#d5e0ea]">
                        <svg viewBox="0 0 72 5" className="h-[5px] w-[72px]">
                            <path d="M0 5h8L4 0zM64 0h8l-4 5z" fill="#4f5a65" />
                            <path d="M27 2.500h18" stroke="#66727f" strokeWidth="2" strokeDasharray="1 3" />
                        </svg>
                    </div>
                    <h2 className={clsx("h-[25px] shrink-0 pl-[9px] text-[14px] leading-[26px] font-bold text-[#111]", sans)}>Objects</h2>
                    <div className="min-h-0 flex-1 overflow-hidden bg-[#d3deed]">
                        <ObjectsTable />
                    </div>
                </div>
                <div className={clsx("mt-[5px] flex h-[29px] shrink-0 border-t border-l border-[#66727f] text-[11px] whitespace-nowrap text-black", sans)}>
                    <div className="flex gap-[6px] pt-[6px] pr-[6px] pl-2">
                        <NavButton label="Previous tab" d={leftTri} off />
                        <NavButton label="Next tab" d={rightTri} off />
                    </div>
                    {panelTabs.map((t) => (
                        <button
                            key={t.icon}
                            type="button"
                            className={clsx(
                                "flex h-[23px] items-center border-r border-b-2 border-l border-[#66727f] border-l-white pl-[3px]",
                                t.width,
                                t.active ? "-mt-px bg-[#d9e6f3] pl-[6px]" : "bg-[#bfb8c3]"
                            )}
                        >
                            {t.icon === "$" ? <span className="w-[14px] text-center text-[15px] text-[#123a66]">$</span> : <Icon name={t.icon} size="size-[14px]" />}
                            <span>{t.text}</span>
                        </button>
                    ))}
                </div>
            </div>
        </aside>
    );
}

/* ---------- material dialog ---------- */

const field = "h-5 border border-t-2 border-l-2 border-[#6f7d8b] border-r-white border-b-white bg-[#d2e0ec] px-[1px] pb-[2px]";
const group = "border border-[#8fa5b3] pl-2 shadow-[1px_1px_0_#fff,inset_1px_1px_0_#fff]";

function Field({ id, label, children }: { id: string; label: string; children: ReactNode }) {
    return (
        <div className="flex">
            <label htmlFor={id} className="w-[88px] shrink-0 pt-[3px] leading-[14px]">{label}</label>
            {children}
        </div>
    );
}

function Combo({ id, options }: { id: string; options: string[] }) {
    return (
        <div className="relative">
            <select id={id} className={clsx(field, "block w-[185px] appearance-none pl-[2px]")}>
                {options.map((o) => <option key={o}>{o}</option>)}
            </select>
            <span className="pointer-events-none absolute top-[2px] right-[1px] flex size-4 items-center justify-center border border-[#a9b7c5] bg-[#e6eff8]">
                <svg viewBox="0 0 10 6" className="h-[6px] w-[10px]"><path d="M0 0h10L5 6z" fill="#0c1a2c" /></svg>
            </span>
        </div>
    );
}

const pageArt: Record<string, ReactNode> = {
    "Blank Drawing": <path d="M6 1v38M1 34.500h30" stroke="#8fb0c8" />,
    "From Resizable Design": (
        <>
            <path d="M4 19h8v11H4zM12 15h5l2-2h6l2 2 1 4v11l-1 4-2 2h-6l-2-2h-5z" fill="#d8fbe0" stroke="#c8321e" strokeWidth="1.400" />
            <path d="M5 19v11M12 19h16M12 30h16M17 15v19M24 14v21" stroke="#35c845" strokeWidth="1.300" />
        </>
    ),
    "External 3D object": (
        <>
            <path d="M9 29h19l-6 7H5z" fill="#fff" stroke="#315f8b" />
            <circle cx="16" cy="22" r="8.500" fill="#f2f8fe" stroke="#315f8b" />
        </>
    ),
    Import: <path d="M7 20h9v-5l9 8-9 8v-5H7z" fill="#f2f8fe" stroke="#315f8b" />,
};

function SourceList() {
    return (
        <div className="flex w-[173px] flex-col pt-1">
            {Object.entries(pageArt).map(([name, art], i) => (
                <button
                    key={name}
                    type="button"
                    className={clsx(
                        "flex h-[70px] flex-col items-center border pt-[5px] text-[14px] leading-[18px] whitespace-nowrap",
                        i === 0 ? "border-[#8797aa] border-r-white border-b-white bg-[#c0cbde]" : "border-transparent"
                    )}
                >
                    <svg viewBox="0 0 32 40" className="mb-[5px] h-10 w-8 overflow-visible" fill="none" aria-hidden="true">
                        <path d="M.5.500h24l7 7v32H.5z" fill="#fdfeff" stroke="#0d2440" />
                        <path d="M24.500.500v7h7" fill="#e3eef8" stroke="#0d2440" />
                        {art}
                    </svg>
                    {name}
                </button>
            ))}
        </div>
    );
}

function MaterialDialog() {
    return (
        <div role="dialog" aria-label="Material" className={clsx("absolute top-[305px] left-[306px] w-[775px] border border-[#4f8f96] bg-[#7db1ba] px-[6px] pb-[7px] text-[11px] text-[#0c1a2c]", sans)}>
            <div className="relative flex h-[29px] items-center">
                <span className="pl-[3px]"><AppLogo size="size-[17px]" /></span>
                <h2 className={clsx("absolute inset-x-0 pr-1 text-center text-[14px] text-[#2b474c]", noto)}>Material</h2>
                <div className="relative ml-auto flex h-full items-start">
                    <button type="button" aria-label="Help" className={clsx("w-[30px] text-[13px] leading-5 font-bold text-black", noto)}>?</button>
                    <button type="button" aria-label="Close dialog" className="flex h-[19px] w-[45px] items-center justify-center bg-[#c75050]">
                        <svg viewBox="0 0 8 8" className="size-2" stroke="#fff" strokeWidth="1.600"><path d="M0 0l8 8M8 0L0 8" /></svg>
                    </button>
                </div>
            </div>
            <div className="border border-[#5d979f] bg-[#d2e1ef] px-[7px] pb-[9px]">
                <div className="flex h-[60px] flex-col items-center gap-[5px] pt-[15px] pr-1">
                    <span className="size-3 rounded-full border border-[#b96a17] bg-[#f7931e]" />
                    <span className="leading-[14px]">Material</span>
                </div>
                <div className="flex gap-4 pr-1 pl-[7px]">
                    <SourceList />
                    <div className="min-w-0 flex-1">
                        <fieldset className={clsx(group, "pr-[10px] pb-[10px]")}>
                            <legend className="-ml-[3px] px-[3px] leading-4">Project Properties</legend>
                            <div className="flex flex-col gap-[6px] pt-[3px]">
                                <Field id="file" label="File name:">
                                    <input id="file" defaultValue="Project 5" className={clsx(field, "min-w-0 flex-1")} />
                                </Field>
                                <Field id="title" label="Title:">
                                    <div className="relative flex min-w-0 flex-1">
                                        <input id="title" className={clsx(field, "min-w-0 flex-1")} />
                                        <span className="absolute top-[3px] left-[3px] h-[13px] w-px bg-black" />
                                    </div>
                                </Field>
                                <Field id="desc" label="Description:">
                                    <textarea id="desc" className="h-[46px] min-w-0 flex-1 resize-none border border-t-2 border-l-2 border-[#6f7d8b] border-r-white border-b-white bg-[#d2e0ee]" />
                                </Field>
                                <Field id="author" label="Author:">
                                    <input id="author" defaultValue="Andrey" className={clsx(field, "min-w-0 flex-1")} />
                                </Field>
                            </div>
                        </fieldset>
                        <fieldset className={clsx(group, "mt-3 pr-[9px] pb-3")}>
                            <legend className="-ml-[3px] px-[3px] leading-4">Material</legend>
                            <div className="flex justify-between pt-[3px]">
                                <div className="flex flex-col gap-[6px]">
                                    <Field id="base" label="Base type:"><Combo id="base" options={["Folding Carton Cardboard"]} /></Field>
                                    <Field id="name" label="Name:"><Combo id="name" options={["SBB (GZ)"]} /></Field>
                                    <Field id="type" label="Type:">
                                        <input id="type" readOnly value="Coated White Back (GZ)" className={clsx(field, "w-[185px]")} />
                                    </Field>
                                    <Field id="thick" label="Thickness:">
                                        <input id="thick" defaultValue="0,50" className={clsx(field, "w-[57px]")} />
                                        <div className="ml-px flex w-3 flex-col">
                                            <button type="button" aria-label="Increase" className="flex h-[10px] items-center justify-center border border-[#8292a2] bg-[#e6eff8]">
                                                <svg viewBox="0 0 4 2" className="h-[2px] w-1"><path d="M0 2h4L2 0z" fill="#333" /></svg>
                                            </button>
                                            <button type="button" aria-label="Decrease" className="flex h-[10px] items-center justify-center border border-t-0 border-[#8292a2] bg-[#e6eff8]">
                                                <svg viewBox="0 0 4 2" className="h-[2px] w-1"><path d="M0 0h4L2 2z" fill="#333" /></svg>
                                            </button>
                                        </div>
                                        <span className="pt-[3px] pl-[3px] leading-[14px]">mm</span>
                                    </Field>
                                </div>
                                <div className="w-60">
                                    <div className="flex h-[35px] items-center gap-[6px] border-t-2 border-l border-[#6f7d8b] pl-[6px]">
                                        <Tool icon="zoomAll" label="Fit view" />
                                        <Sep wide />
                                        <Tool icon="zoom" label="Zoom view" />
                                        <Tool icon="pan" label="Pan view" />
                                        <Tool icon="rotate" label="Rotate view" state="pressed" />
                                        <Sep wide />
                                        <Tool icon="bulb" label="Light" />
                                    </div>
                                    <svg viewBox="0 0 238 190" className="block h-[191px] w-full border-t-2 border-r border-b border-l border-[#6f7d8b] border-r-white border-b-white bg-[#bdc9d8]" aria-label="Material preview">
                                        <defs>
                                            <linearGradient id="board" x1="0.300" y1="0" x2="0.700" y2="1">
                                                <stop offset="0" stopColor="#b2b2b2" />
                                                <stop offset="1" stopColor="#cbcbcb" />
                                            </linearGradient>
                                        </defs>
                                        <path d="M31 137l82-94 93-23-83 149z" fill="url(#board)" />
                                    </svg>
                                </div>
                            </div>
                        </fieldset>
                    </div>
                </div>
                <div className="mt-3 h-[2px] border-t border-[#8298a8] bg-white" />
                <div className="flex justify-end gap-2 pt-3">
                    {[
                        { text: <>&lt; <u>B</u>ack</>, off: true },
                        { text: <><u>N</u>ext &gt;</>, off: true },
                        { text: "Finish" },
                        { text: "Cancel" },
                        { text: <><u>H</u>elp</> },
                    ].map((b, i) => (
                        <button
                            key={i}
                            type="button"
                            disabled={b.off}
                            className={clsx("h-[21px] w-[73px] border", b.off ? "border-[#9fb0bf] text-[#93a1af]" : "border-[#7f93a8] bg-[#e8f1f9] text-black shadow-[1px_1px_1px_#8797a8]")}
                        >
                            {b.text}
                        </button>
                    ))}
                </div>
                <svg viewBox="0 0 16 12" className="absolute right-2 bottom-2 h-3 w-4" stroke="#5f6f80"><path d="M4 12L16 0M8 12l8-8M12 12l4-4" /></svg>
            </div>
            <div role="tooltip" className={clsx("absolute top-[233px] left-[175px] border border-[#9dafbf] border-r-white border-b-white bg-[#d8e5f1] px-[2px] leading-[17px] whitespace-nowrap", noto)}>
                From Resizable Design
            </div>
        </div>
    );
}

/* ---------- taskbar ---------- */

const taskIcons: { name: string; open?: boolean; active?: boolean; art: ReactNode }[] = [
    {
        name: "File Explorer",
        art: (
            <>
                <path d="M1 4h11l2-2h14v6H1z" fill="#e7c766" />
                <path d="M4 3h6v3H4z" fill="#4aa564" /><path d="M12 3h6v3h-6z" fill="#e3e3e3" />
                <path d="M0 8h32v20H0z" fill="#f6e3a0" /><path d="M0 8h32v8H0z" fill="#fbeebc" />
                <path d="M5 30V19c0-2 1-3 3-3h16c2 0 3 1 3 3v11h-5v-8H10v8z" fill="#8fd0ef" stroke="#5aa9d2" />
            </>
        ),
    },
    {
        name: "Chrome",
        art: (
            <>
                <circle cx="16" cy="16" r="14" fill="#f6c915" />
                <path d="M16 16L3.900 9A14 14 0 0 1 28.100 9H16z" fill="#e23b2e" />
                <path d="M16 2a14 14 0 0 1 12.100 7H16z" fill="#e23b2e" />
                <path d="M3.900 9A14 14 0 0 0 16 30l6-10.500L16 16l-6 3.500z" fill="#3aa757" />
                <circle cx="16" cy="16" r="6.500" fill="#fff" /><circle cx="16" cy="16" r="5" fill="#3b76d8" />
            </>
        ),
    },
    {
        name: "Window manager",
        open: true,
        art: (
            <>
                <path d="M3 3l13 2 13-2-2 13 2 13-13-2-13 2 2-13z" fill="none" stroke="#e0483e" strokeWidth="1.500" />
                <path d="M5 5h10v10H5z" fill="#0d9090" /><path d="M17 5h10v10H17z" fill="#1b9fd8" />
                <path d="M5 17h10v10H5z" fill="#14a81e" /><path d="M17 17h10v10H17z" fill="#b9c91c" />
            </>
        ),
    },
    {
        name: "Package Designer",
        open: true,
        active: true,
        art: (
            <>
                <path d="M16 1l14 6v18l-14 6-14-6V7z" fill="#0c368c" stroke="#0a2a70" />
                <path d="M14 7a10 10 0 1 0 5 20M12 18h14M12 18L21 8M17 8h4v4M23 15l3 3-3 3M17 24l3 3-4 2" fill="none" stroke="#fff" strokeWidth="1.500" />
            </>
        ),
    },
    {
        name: "CorelDRAW",
        open: true,
        art: (
            <>
                <path d="M0 1h32v30H0z" fill="#6fb443" />
                <path d="M1 8l14 11 5 11-10-4z" fill="#fff" />
                <path d="M18 1l5 15h3L32 1z" fill="#c7e5b0" /><path d="M23 1l1 15h2l1-15z" fill="#f3fbee" />
                <path d="M22 17h5l-1 7h-3z" fill="#dff0d2" />
            </>
        ),
    },
    {
        name: "Keep",
        art: (
            <>
                <path d="M4 4h24v19l-5 5H4z" fill="#f4b81c" /><path d="M28 23h-5v5z" fill="#fbe08a" />
                <path d="M13 20c0-3-3-4-3-7a6 6 0 0 1 12 0c0 3-3 4-3 7zM13 23h6" fill="none" stroke="#fff" strokeWidth="1.500" />
            </>
        ),
    },
    {
        name: "Messenger",
        art: (
            <>
                <circle cx="15" cy="17" r="14" fill="#0d1e33" /><circle cx="15" cy="17" r="12" fill="none" stroke="#2f9de0" strokeWidth="4" />
                <path d="M19 13c-8-3-11 8-2 10" fill="none" stroke="#f2f8fd" strokeWidth="3" />
                <circle cx="24" cy="8" r="8" fill="#c22024" />
                <path d="M21 6v1M26.500 6v1M20.500 12c2-3 5-3 7 0" stroke="#fff" strokeWidth="1.500" fill="none" />
            </>
        ),
    },
    {
        name: "Apps",
        art: (
            <>
                <rect x="1" y="1" width="30" height="30" rx="2" fill="#f4f4f4" />
                <path d="M8 8h5v4H8zM14 8h5v4h-5zM20 8h5v4h-5z" fill="#d6463c" />
                <path d="M8 14h5v4H8z" fill="#3d9c58" /><path d="M14 14h5v4h-5z" fill="#3c74d0" /><path d="M20 14h5v4h-5zM14 20h5v4h-5zM20 20h5v4h-5z" fill="#e0b52e" />
                <path d="M8 20h5v4H8z" fill="#3d9c58" />
            </>
        ),
    },
    {
        name: "Remote Desktop",
        art: (
            <>
                <path d="M2 2l24 2v18L3 20z" fill="#b9c3cf" /><path d="M4 4l20 2v14L5 18z" fill="#1c39c8" /><path d="M14 5l10 1v14z" fill="#7f9be8" />
                <path d="M12 22h6l3 7H9z" fill="#dfe4ea" />
                <circle cx="23" cy="25" r="6" fill="#e7ecef" stroke="#a8b4bc" /><path d="M20 23l3 2-2 3M26 22l-3 2 3 3" stroke="#33923c" fill="none" strokeWidth="1.500" />
            </>
        ),
    },
    {
        name: "Yandex",
        art: (
            <>
                <ellipse cx="16" cy="16" rx="13" ry="15" fill="#efefef" />
                <path d="M4 7c3-4 8-3 9 2l3 6 6-12 6 3-9 14v11h-6V20z" fill="#e01e1e" />
            </>
        ),
    },
    {
        name: "Total Commander",
        open: true,
        art: (
            <>
                <path d="M1 1h29l1 1v29H2l-1-1z" fill="#1743c8" />
                <path d="M8 1h16v11H8z" fill="#9fb3d8" /><path d="M12 2h5v9h-5z" fill="#163a9e" />
                <path d="M5 15h22v16H5z" fill="#fff" /><path d="M7 18.500h18M7 22.500h18M7 26.500h18" stroke="#a32630" strokeWidth="1.500" />
                <text x="21" y="13" fontSize="12" fontWeight="bold" fill="#fff" fontFamily="Liberation Serif, serif">E</text>
            </>
        ),
    },
    {
        name: "Image viewer",
        open: true,
        art: (
            <>
                <path d="M3 4h26v26H3z" fill="#e2512b" />
                <path d="M16 1l14 15-14 15L2 16z" fill="#f1c796" stroke="#a86a3a" />
                <ellipse cx="16" cy="17" rx="9" ry="5.500" fill="#fff" stroke="#3a2a1c" />
                <circle cx="16" cy="17" r="4.500" fill="#1f74c4" /><circle cx="16" cy="17" r="2" fill="#07203c" />
                <path d="M9 10l-1-3M13 8l-1-3M18 8l1-3M22 10l2-3" stroke="#3a2a1c" />
            </>
        ),
    },
];

function Taskbar() {
    return (
        <footer className={clsx("relative flex h-10 items-center gap-1 overflow-hidden bg-linear-to-r from-[#48717a] via-[#5d8489] to-[#6f9395] text-white", noto)}>
            <svg className="absolute inset-y-0 right-0 h-10 w-[1180px]" viewBox="0 0 1180 40" fill="none" aria-hidden="true">
                <path d="M20 40L58 2M68 30c18-2 32-16 34-26M90 38l14-12" stroke="#7d9fa1" strokeWidth="1.500" opacity=".6" />
                <path d="M332 40L360 0h28l-6 8-14 10-12 22z" fill="#2f4d53" opacity=".85" />
                <path d="M344 40l16-30 6 6-10 24z" fill="#86a3a4" opacity=".5" />
                <path d="M392 40l12-40M600 40L614 0M724 0v40" stroke="#3e6066" opacity=".6" />
                <path d="M1060 0l66 40" stroke="#3d575b" strokeWidth="4" opacity=".7" />
                <path d="M1024 42c4-12 26-12 32 0M1076 42l4-9M1090 42l2-9M1100 42V32h8v10" stroke="#a7b04d" strokeWidth="5" />
            </svg>
            <button type="button" aria-label="Start" className="relative flex w-12 justify-center">
                <svg viewBox="0 0 26 26" className="size-[26px]" fill="#fff"><path d="M0 4l10-1.500V12H0zM11.500 2L26 0v12H11.500zM0 13.500h10V23L0 21.500zM11.500 13.500H26V26l-14.500-2z" /></svg>
            </button>
            {taskIcons.map((t) => (
                <button
                    key={t.name}
                    type="button"
                    aria-label={t.name}
                    className={clsx(
                        "relative flex h-[38px] w-[58px] items-center justify-center border",
                        !t.open && "border-transparent",
                        t.open && !t.active && "border-[#9ab4b6] bg-white/15",
                        t.active && "border-white bg-linear-to-b from-[#8398b8] to-[#c3cfe0]"
                    )}
                >
                    <svg viewBox="0 0 32 32" className="size-[30px]" aria-hidden="true">{t.art}</svg>
                </button>
            ))}
            <div className="relative ml-auto flex items-center gap-2 pr-[18px] text-[11px]">
                <svg viewBox="0 0 8 6" className="mr-2 h-[5px] w-2" fill="#fff"><path d="M0 6h8L4 0z" /></svg>
                <svg viewBox="0 0 16 16" className="size-4" fill="#fff"><path d="M1 0h1.500v16H1zM3 2c3-2 4 1 6 1v6c-2 0-3-2-6-1zM9 4c2 1 4 0 6-1l-1 5c-2 1-4 1-5 0z" /></svg>
                <svg viewBox="0 0 26 26" className="size-4" fill="#fff"><path d="M0 4l11-1.500V12H0zM12.500 2L26 0v12H12.500zM0 13.500h11V23L0 21.500zM12.500 13.500H26V26l-13.500-2z" /></svg>
                <svg viewBox="0 0 16 16" className="size-4" fill="none" stroke="#fff" strokeWidth="1.300"><path d="M5.500 3.500h10v8h-10M1.500 1.500h3v4h-3zM3 6v9M6 14.500h8M10.500 12v2" /></svg>
                <svg viewBox="0 0 16 16" className="size-4" fill="none" stroke="#fff"><path d="M1 6h2l4-4v12l-4-4H1z" fill="#fff" /><path d="M9 5.500c1.500 2 1.500 3.500 0 5M11 3.500c3 3 3 6 0 9" /></svg>
                <span className="ml-[6px]">ENG</span>
                <div className="ml-[6px] text-center leading-[18px]">
                    <div>16:40</div>
                    <div>10.08.2015</div>
                </div>
            </div>
        </footer>
    );
}

export default function App() {
    return (
        <div className="relative flex h-screen flex-col overflow-hidden bg-[#d2e1ef]">
            <TitleBar />
            <MenuBar />
            <div className="h-[2px] bg-[#5c6a78]" />
            <MainToolbar />
            <StyleBar />
            <main className="flex min-h-0 flex-1">
                <DrawingPane />
                <SidePanel />
            </main>
            <div className={clsx("flex h-[17px] items-center border-t border-white pl-[5px] text-[11px] text-[#0c1a2c]", sans)}>
                <span className="flex-1">From Resizable Design</span>
                <span className="mr-[18px] h-[15px] w-[199px] border border-[#9dafbf] border-r-white border-b-white" />
                <span className="w-[38px]">JDF</span>
            </div>
            <Taskbar />
            <MaterialDialog />
        </div>
    );
}
